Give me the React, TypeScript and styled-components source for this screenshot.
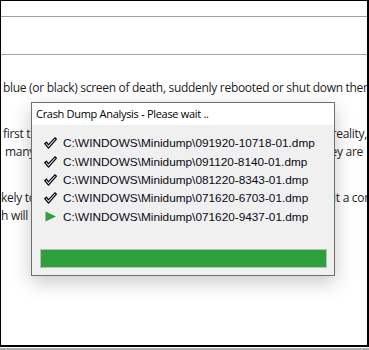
import React from "react";
import styled, { createGlobalStyle } from "styled-components";

const GlobalStyle = createGlobalStyle`
    html, body {
        margin: 0;
        padding: 0;
        background: #ffffff;
    }
    #root {
        width: 369px;
        height: 350px;
    }
`;

const Screen = styled.div`
    width: 369px;
    height: 350px;
    background: #ffffff;
    border-bottom: 2px solid #ababab;
    box-sizing: border-box;
    padding-bottom: 1px;
`;

const Frame = styled.div`
    position: relative;
    height: 347px;
    box-sizing: border-box;
    border-top: 1px solid #000;
    border-left: 1px solid #000;
    border-right: 2px solid #000;
    border-bottom: 2px solid #000;
    overflow: hidden;
`;

const HeaderRow = styled.div<{ $h: number }>`
    height: ${(p) => p.$h}px;
    border-bottom: 1px solid #a0a0a0;
`;

const Article = styled.div`
    padding-top: 24px;
    font-family: "Open Sans", "Noto Sans", sans-serif;
    font-size: 12px;
    letter-spacing: -0.3px;
    color: #1e1e1e;
`;

const Paragraph = styled.div`
    margin-bottom: 28px;
`;

const Line = styled.div<{ $indent?: number }>`
    display: flex;
    justify-content: space-between;
    height: 18px;
    line-height: 18px;
    white-space: nowrap;
    padding-left: ${(p) => p.$indent ?? 2}px;
`;

const Tail = styled.span<{ $pull?: number }>`
    margin-right: ${(p) => p.$pull ?? 0}px;
`;

const Dialog = styled.div`
    position: absolute;
    left: 30px;
    top: 101px;
    width: 304px;
    height: 174px;
    box-sizing: border-box;
    border: 1px solid #6e6e6e;
    background: #f0f0f0;
    box-shadow: 0 6px 18px rgba(0, 0, 0, 0.22);
    display: flex;
    flex-direction: column;
`;

const TitleBar = styled.div`
    height: 22px;
    background: #ffffff;
    padding-left: 4px;
    font-family: "Open Sans", "Noto Sans", sans-serif;
    font-size: 11px;
    letter-spacing: -0.3px;
    line-height: 22px;
    color: #000;
`;

const FileList = styled.ul`
    list-style: none;
    margin: 0;
    padding: 9px 0 0 12px;
    flex: 1;
`;

const FileRow = styled.li`
    display: flex;
    align-items: center;
    height: 18.4px;
    gap: 6px;
    font-family: "Liberation Sans", Arial, sans-serif;
    font-size: 11.8px;
    color: #0a0a18;
`;

const IconBox = styled.span`
    width: 13px;
    height: 12px;
    display: flex;
    align-items: center;
    justify-content: center;
`;

const Progress = styled.div`
    margin: 0 7px 7px 8px;
    height: 19px;
    box-sizing: border-box;
    border: 1px solid #bcbcbc;
    background: #e6e6e6;
`;

const ProgressFill = styled.div`
    height: 100%;
    background: #2d9f3c;
`;

const CheckIcon = () => (
    <svg width="13" height="12" viewBox="0 0 13 12">
        <path
            d="M0.8 6.6 L2.5 5.2 L4.4 7.9 L10.9 0.8 L12.4 2.2 L4.5 11.1 Z"
            fill="#ffffff"
            stroke="#000000"
            strokeWidth="1.25"
            strokeLinejoin="round"
        />
    </svg>
);

const PlayIcon = () => (
    <svg width="13" height="11" viewBox="0 0 13 11">
        <path d="M1.5 0.5 L12 5.5 L1.5 10.5 Z" fill="#2f9e3e" />
    </svg>
);

const files = [
    { path: "C:\\WINDOWS\\Minidump\\091920-10718-01.dmp", done: true },
    { path: "C:\\WINDOWS\\Minidump\\091120-8140-01.dmp", done: true },
    { path: "C:\\WINDOWS\\Minidump\\081220-8343-01.dmp", done: true },
    { path: "C:\\WINDOWS\\Minidump\\071620-6703-01.dmp", done: true },
    { path: "C:\\WINDOWS\\Minidump\\071620-9437-01.dmp", done: false },
];

export default function App() {
    const progress = 100;

    return (
        <>
            <GlobalStyle />
            <Screen>
                <Frame>
                    <HeaderRow $h={15} />
                    <HeaderRow $h={37} />
                    <Article>
                        <Paragraph>
                            <Line>blue (or black) screen of death, suddenly rebooted or shut down then</Line>
                        </Paragraph>
                        <Paragraph>
                            <Line>
                                <span>first time</span>
                                <Tail>reality,</Tail>
                            </Line>
                            <Line $indent={4}>
                                <span>many</span>
                                <Tail $pull={4}>they are</Tail>
                            </Line>
                        </Paragraph>
                        <Paragraph>
                            <Line $indent={0}>
                                <span>kely to</span>
                                <Tail $pull={-8}>it a com</Tail>
                            </Line>
                            <Line $indent={0}>
                                <span>h will be</span>
                            </Line>
                        </Paragraph>
                    </Article>

                    <Dialog>
                        <TitleBar>Crash Dump Analysis - Please wait ..</TitleBar>
                        <FileList>
                            {files.map((f) => (
                                <FileRow key={f.path}>
                                    <IconBox>{f.done ? <CheckIcon /> : <PlayIcon />}</IconBox>
                                    {f.path}
                                </FileRow>
                            ))}
                        </FileList>
                        <Progress>
                            <ProgressFill style={{ width: `${progress}%` }} />
                        </Progress>
                    </Dialog>
                </Frame>
            </Screen>
        </>
    );
}
